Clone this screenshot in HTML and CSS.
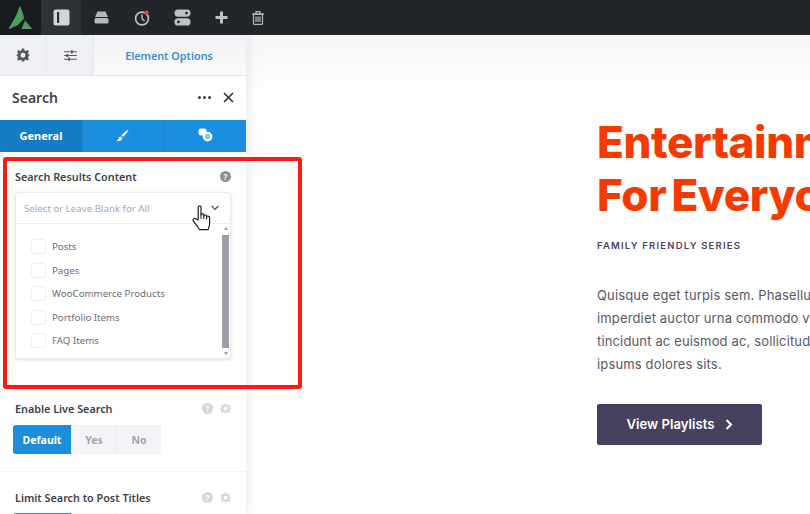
FILE: index.html
```html
<!DOCTYPE html>
<html lang="en">
<head>
    <meta charset="UTF-8">
    <meta name="viewport" content="width=device-width, initial-scale=1.0">
    <title>Search Element Options</title>
    <link rel="stylesheet" href="styles.css">
</head>
<body>

    <!-- TOP TOOLBAR -->
    <div class="toolbar">
        <div class="tool logo">
            <svg width="25" height="25" viewBox="0 0 25 25"><path fill="#4c9e5c" d="M11.6 1.5 C12.2 1.5 12.5 2 12.8 2.8 C14.4 6.6 15.4 10 16.2 13.2 L10 20 L2 23.8 C1 24.2 .5 23.6 1 22.8 C5 16.5 9 10 11.2 2.2 Z"/><path fill="#4c9e5c" d="M17 15.5 L24.4 24 L13.4 24 Z"/></svg>
        </div>
        <div class="tool active">
            <svg width="17" height="17" viewBox="0 0 17 17"><rect x=".5" y=".5" width="16" height="16" rx="2" fill="#d4d4d4"/><rect x="4" y="3" width="2.2" height="11" fill="#2b3037"/></svg>
        </div>
        <div class="tool">
            <svg width="15" height="13" viewBox="0 0 15 13"><path fill="#b5b6b8" d="M3.5 .5 H11.5 L14 6 H1 Z"/><rect x=".5" y="7" width="14" height="5.5" rx="1.5" fill="#b5b6b8"/></svg>
        </div>
        <div class="tool tool-wide">
            <svg width="16" height="16" viewBox="0 0 16 16"><circle cx="8" cy="8.5" r="6.4" fill="none" stroke="#c0c1c3" stroke-width="1.7"/><path d="M8 4.5 V8.8 L10.5 11" fill="none" stroke="#c0c1c3" stroke-width="1.4"/><circle cx="12.6" cy="2.6" r="2.2" fill="#d0404a"/></svg>
        </div>
        <div class="tool">
            <svg width="17" height="17" viewBox="0 0 17 17"><rect x=".5" y=".5" width="16" height="7.2" rx="3.6" fill="#c0c1c3"/><circle cx="12.5" cy="4.1" r="1.4" fill="#22262b"/><rect x=".5" y="9.3" width="16" height="7.2" rx="3.6" fill="#c0c1c3"/><circle cx="4.5" cy="12.9" r="1.4" fill="#22262b"/></svg>
        </div>
        <div class="tool tool-plus">
            <svg width="13" height="13" viewBox="0 0 13 13"><path fill="#c0c1c3" d="M5 .5 H8 V5 H12.5 V8 H8 V12.5 H5 V8 H.5 V5 H5 Z"/></svg>
        </div>
        <div class="tool tool-trash">
            <svg width="12" height="14" viewBox="0 0 12 14"><path fill="none" stroke="#b5b6b8" stroke-width="1.2" d="M1.5 3.5 H10.5 V12.5 Q10.5 13.4 9.6 13.4 H2.4 Q1.5 13.4 1.5 12.5 Z M0 2.8 H12 M4 2.6 V.7 H8 V2.6 M4 5.5 V11 M6 5.5 V11 M8 5.5 V11"/></svg>
        </div>
    </div>

    <div class="workspace">

        <!-- OPTIONS SIDEBAR -->
        <div class="sidebar">
            <div class="side-tabs">
                <div class="side-tab">
                    <svg width="14" height="14" viewBox="0 0 24 24"><path fill="#55585e" fill-rule="evenodd" d="M10 1 H14 L14.6 4.2 L16.8 5.1 L19.5 3.3 L22.3 6.1 L20.5 8.8 L21.4 11 L23 11.4 V13.4 L21.4 14 L20.5 16.2 L22.3 18.9 L19.5 21.7 L16.8 19.9 L14.6 20.8 L14 23 H10 L9.4 20.8 L7.2 19.9 L4.5 21.7 L1.7 18.9 L3.5 16.2 L2.6 14 L1 13.4 V11.4 L2.6 11 L3.5 8.8 L1.7 6.1 L4.5 3.3 L7.2 5.1 L9.4 4.2 Z M12 8.2 A4.2 4.2 0 1 0 12 16.6 A4.2 4.2 0 1 0 12 8.2 Z"/></svg>
                </div>
                <div class="side-tab">
                    <svg width="13" height="11" viewBox="0 0 14 12"><path stroke="#55585e" stroke-width="1.1" d="M0 2 H14 M0 6 H14 M0 10 H14"/><path stroke="#55585e" stroke-width="2" d="M8.5 .3 V3.7 M3.5 4.3 V7.7 M5.5 8.3 V11.7"/></svg>
                </div>
                <div class="side-tab current">Element Options</div>
            </div>

            <div class="panel-head">
                <span class="panel-title">Search</span>
                <span class="dots"><i></i><i></i><i></i></span>
                <svg width="11" height="11" viewBox="0 0 11 11"><path stroke="#2f3236" stroke-width="1.6" d="M1 1 L10 10 M10 1 L1 10"/></svg>
            </div>

            <div class="blue-tabs">
                <div class="blue-tab selected">General</div>
                <div class="blue-tab">
                    <svg class="brush" width="13" height="13" viewBox="0 0 13 13"><path fill="#fff" d="M12.6 .4 C10 1.6 7 4.2 5.4 6.6 L7 8 C9.2 6 11.6 3 12.6 .4 Z M4.6 7.4 C2.9 7.6 3.1 10.4 .6 11.4 C3 12.9 6.4 11.7 6.2 8.9 Z"/></svg>
                </div>
                <div class="blue-tab">
                    <svg width="15" height="14" viewBox="0 0 15 14"><rect x=".5" y=".5" width="8" height="7" rx="2" fill="#fff"/><circle cx="9.6" cy="8.6" r="3.8" fill="#8cc8ee" stroke="#fff" stroke-width="2"/></svg>
                </div>
            </div>

            <div class="option first">
                <div class="option-label">
                    <span>Search Results Content</span>
                    <span class="help dark">?</span>
                </div>
                <div class="select">
                    <div class="select-head">
                        <span>Select or Leave Blank for All</span>
                        <svg width="8" height="6" viewBox="0 0 8 6"><path fill="none" stroke="#4a4d52" stroke-width="1.2" d="M.7 1 L4 4.4 L7.3 1"/></svg>
                    </div>
                    <div class="select-body">
                        <div class="choices">
                            <label class="choice"><i class="check"></i>Posts</label>
                            <label class="choice"><i class="check"></i>Pages</label>
                            <label class="choice"><i class="check"></i>WooCommerce Products</label>
                            <label class="choice"><i class="check"></i>Portfolio Items</label>
                            <label class="choice"><i class="check"></i>FAQ Items</label>
                        </div>
                        <div class="scrollbar">
                            <b class="arrow-up"></b>
                            <div class="thumb"></div>
                            <b class="arrow-down"></b>
                        </div>
                    </div>
                </div>
            </div>

            <div class="option live">
                <div class="option-label">
                    <span>Enable Live Search</span>
                    <span class="help">?</span>
                    <svg class="cog" width="11" height="11" viewBox="0 0 24 24"><path fill="#d5d7da" fill-rule="evenodd" d="M10 1 H14 L14.6 4.2 L16.8 5.1 L19.5 3.3 L22.3 6.1 L20.5 8.8 L21.4 11 L23 11.4 V13.4 L21.4 14 L20.5 16.2 L22.3 18.9 L19.5 21.7 L16.8 19.9 L14.6 20.8 L14 23 H10 L9.4 20.8 L7.2 19.9 L4.5 21.7 L1.7 18.9 L3.5 16.2 L2.6 14 L1 13.4 V11.4 L2.6 11 L3.5 8.8 L1.7 6.1 L4.5 3.3 L7.2 5.1 L9.4 4.2 Z M12 8.2 A4.2 4.2 0 1 0 12 16.6 A4.2 4.2 0 1 0 12 8.2 Z"/></svg>
                </div>
                <div class="switch">
                    <div class="on">Default</div>
                    <div>Yes</div>
                    <div>No</div>
                </div>
            </div>

            <div class="option titles">
                <div class="option-label">
                    <span>Limit Search to Post Titles</span>
                    <span class="help">?</span>
                    <svg class="cog" width="11" height="11" viewBox="0 0 24 24"><path fill="#d5d7da" fill-rule="evenodd" d="M10 1 H14 L14.6 4.2 L16.8 5.1 L19.5 3.3 L22.3 6.1 L20.5 8.8 L21.4 11 L23 11.4 V13.4 L21.4 14 L20.5 16.2 L22.3 18.9 L19.5 21.7 L16.8 19.9 L14.6 20.8 L14 23 H10 L9.4 20.8 L7.2 19.9 L4.5 21.7 L1.7 18.9 L3.5 16.2 L2.6 14 L1 13.4 V11.4 L2.6 11 L3.5 8.8 L1.7 6.1 L4.5 3.3 L7.2 5.1 L9.4 4.2 Z M12 8.2 A4.2 4.2 0 1 0 12 16.6 A4.2 4.2 0 1 0 12 8.2 Z"/></svg>
                </div>
                <!-- only the top edge of this switch is in view -->
                <div class="switch">
                    <div class="on"></div>
                    <div></div>
                    <div></div>
                </div>
            </div>
        </div>

        <!-- PAGE PREVIEW -->
        <div class="preview">
            <h1>Entertainment<br>For Everyone</h1>
            <p class="series">FAMILY FRIENDLY SERIES</p>
            <p class="copy">Quisque eget turpis sem. Phasellus<br>imperdiet auctor urna commodo vel<br>tincidunt ac euismod ac, sollicitudin<br>ipsums dolores sits.</p>
            <a class="playlist-btn">View Playlists
                <svg width="8" height="11" viewBox="0 0 8 11"><path fill="none" stroke="#fff" stroke-width="2" d="M1.5 1 L6 5.5 L1.5 10"/></svg>
            </a>
        </div>
    </div>

    <!-- annotation and cursor lie over the page -->
    <div class="red-box"></div>
    <svg class="hand" width="21" height="26" viewBox="0 0 21 26"><path fill="#fff" stroke="#1d1d1d" stroke-width="1.2" stroke-linejoin="round" d="M6.2 15 V2.6 C6.2 .4 9 .4 9 2.6 V10 C9 8.4 11.8 8.4 11.8 10 V11 C11.8 9.6 14.6 9.6 14.6 11.2 V12 C14.6 10.6 17.6 10.8 17.6 12.6 V19 C17.6 21 16.8 22 16.2 24.6 H7.4 C6.6 22 3.6 19 1.6 16.4 C.2 14.6 2 12.6 3.8 13.8 Z"/><path fill="none" stroke="#1d1d1d" stroke-width="1" d="M9 10 V14 M11.8 11 V14 M14.6 12 V14.4"/></svg>

</body>
</html>
```

FILE: styles.css
```css
* { margin: 0; padding: 0; box-sizing: border-box; }

html, body {
    width: 810px;
    height: 514px;
    overflow: hidden;
}

body {
    position: relative;
    background: #fff;
    color: #3f4247;
    font-family: "Noto Sans", "Open Sans", sans-serif;
}

/* Top toolbar */
.toolbar {
    display: flex;
    height: 35px;
    background: #22262b;
}

.tool {
    width: 40px;
    display: flex;
    align-items: center;
    justify-content: center;
}

.tool-wide { width: 41px; }
.tool-plus { width: 38px; }
.tool-trash { width: 36px; }

.logo {
    width: 41px;
    background: #181b1e;
}

.active { background: #2d3239; }

.workspace {
    display: flex;
    height: 479px;
}

/* Sidebar */
.sidebar {
    width: 246px;
    flex-shrink: 0;
    overflow: hidden;
    background: #fff;
    box-shadow: 3px 0 10px rgba(60, 70, 120, 0.09);
    position: relative;
}

.side-tabs {
    display: flex;
    height: 41px;
    border-bottom: 1px solid #e6e7ec;
}

.side-tab {
    width: 47px;
    display: flex;
    align-items: center;
    justify-content: center;
    background: #eff0f3;
    border-right: 1px solid #e6e7ec;
}

.side-tab.current {
    flex: 1;
    padding-right: 2px;
    border-right: none;
    background: linear-gradient(#f2f2f4, #fafafb);
    color: #3a8fcf;
    font-size: 10.8px;
    font-weight: 600;
}

.panel-head {
    display: flex;
    align-items: center;
    height: 44px;
    padding: 0 12px 2px;
}

.panel-title {
    font-size: 14px;
    font-weight: 600;
    flex: 1;
}

.dots {
    display: flex;
    gap: 2px;
    margin-right: 12px;
}

.dots i {
    width: 3px;
    height: 3px;
    border-radius: 50%;
    background: #3a3d42;
}

.blue-tabs {
    display: flex;
    height: 32px;
    background: #1b8fdd;
}

.blue-tab {
    flex: 1;
    display: flex;
    align-items: center;
    justify-content: center;
    padding-bottom: 2px;
    color: #fff;
    font-size: 11px;
    font-weight: 700;
    border-left: 1px solid #1a86cf;
}

.blue-tab.selected {
    width: 82px;
    flex: none;
    background: #147dc4;
    border-left: none;
}

.brush { margin-right: 3px; }

.option { padding: 0 15px; }

.option.first {
    padding-top: 16px;
    height: 247px;
}

.option.live {
    height: 73px;
    padding-top: 1px;
    border-bottom: 1px solid #f4f4f7;
}

.option.titles { padding-top: 17px; }

.option-label {
    display: flex;
    align-items: center;
    gap: 7px;
    height: 16px;
    font-size: 10.8px;
    font-weight: 600;
    color: #3f4247;
}

.option-label span:first-child {
    flex: 1;
}

.help {
    width: 11px;
    height: 11px;
    border-radius: 50%;
    background: #d5d7da;
    color: #fff;
    font-size: 8px;
    font-weight: 700;
    line-height: 11px;
    text-align: center;
}

.help.dark { background: #8c8f95; }

.cog { flex-shrink: 0; }

/* Dropdown */
.select {
    margin-top: 8px;
    border: 1px solid #eceded;
    border-radius: 3px;
    box-shadow: 0 1px 3px rgba(60, 60, 80, 0.18);
    background: #fff;
}

.select-head {
    display: flex;
    align-items: center;
    justify-content: space-between;
    height: 31px;
    padding: 0 11px 0 8px;
    border-bottom: 1px solid #ecedef;
    font-size: 9.7px;
    color: #a5a8ad;
}

.select-body {
    display: flex;
    height: 134px;
}

.choices {
    flex: 1;
    padding-top: 11px;
}

.choice {
    display: flex;
    align-items: center;
    height: 23.5px;
    padding-left: 15px;
    font-size: 9.7px;
    color: #6a6d73;
}

.check {
    width: 15px;
    height: 15px;
    margin-right: 6px;
    border: 1px solid #ecedf0;
    border-radius: 3px;
    background: #fff;
}

.scrollbar {
    width: 7px;
    margin-right: 1px;
    display: flex;
    flex-direction: column;
    align-items: center;
    justify-content: space-between;
    padding: 3px 0;
}

.thumb {
    width: 7px;
    height: 113px;
    background: #9d9ea6;
}

.arrow-up, .arrow-down {
    width: 0;
    height: 0;
    border-left: 2px solid transparent;
    border-right: 2px solid transparent;
}

.arrow-up { border-bottom: 3px solid #9a9a9a; }
.arrow-down { border-top: 3px solid #9a9a9a; }

/* Yes / no switch */
.switch {
    display: flex;
    width: 148px;
    height: 29px;
    margin: 8px 0 0 -2px;
    border-radius: 3px;
    background: #f4f4f8;
    font-size: 10.5px;
    font-weight: 700;
    color: #a3a5ab;
}

.live .switch { margin-top: 9px; }

.switch div {
    width: 45px;
    display: flex;
    align-items: center;
    justify-content: center;
    border-left: 1px solid #e9e9ee;
}

.switch .on {
    width: 58px;
    background: #1b8fdd;
    color: #fff;
    border: none;
    border-radius: 3px 0 0 3px;
}

/* Preview */
.preview {
    flex: 1;
    overflow: hidden;
    padding: 81px 0 0 351px;
    white-space: nowrap;
    background: linear-gradient(#f6f6f6, #fff 65px);
}

h1 {
    font-family: Inter, sans-serif;
    font-size: 44px;
    font-weight: 800;
    line-height: 53px;
    letter-spacing: -0.4px;
    word-spacing: -4px;
    color: #f53a00;
}

.series {
    margin-top: 18px;
    font-family: Inter, sans-serif;
    font-size: 9.5px;
    font-weight: 600;
    letter-spacing: 1.2px;
    color: #4a4460;
}

.copy {
    margin-top: 33px;
    font-family: Inter, sans-serif;
    font-size: 13px;
    line-height: 23px;
    letter-spacing: 0.15px;
    color: #5a5766;
}

.playlist-btn {
    display: flex;
    align-items: center;
    justify-content: center;
    gap: 10px;
    width: 165px;
    height: 41px;
    margin-top: 28px;
    padding-bottom: 1px;
    border-radius: 2px;
    background: #47405e;
    color: #fff;
    font-family: Inter, sans-serif;
    font-size: 13.2px;
    font-weight: 600;
}

/* Annotation */
.red-box {
    position: absolute;
    left: 3px;
    top: 157px;
    width: 299px;
    height: 232px;
    border: 4px solid #fb1c10;
    border-radius: 3px;
}

.hand {
    position: absolute;
    left: 192px;
    top: 205px;
}
```
